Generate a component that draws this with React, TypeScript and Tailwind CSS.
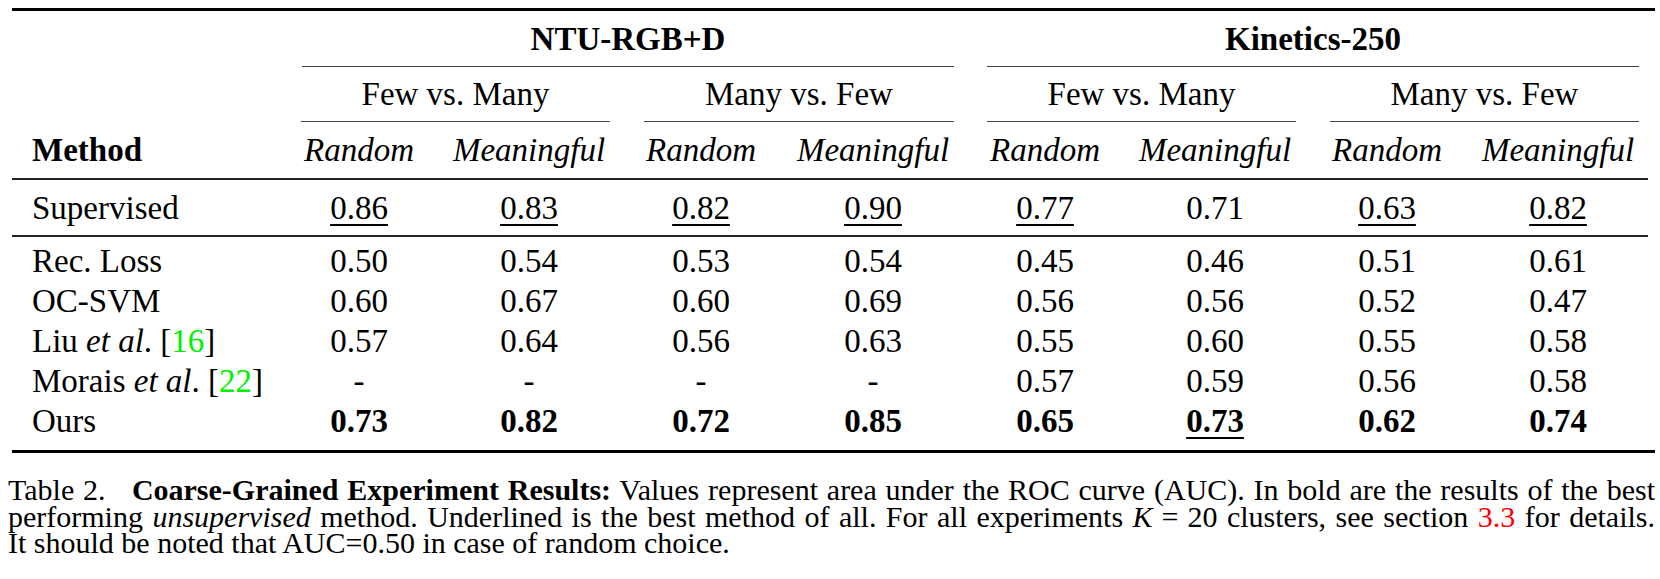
import React from "react";

const U = ({ children }: { children: React.ReactNode }) => (
  <span className="underline decoration-[1.5px] underline-offset-[5px]">{children}</span>
);

const Cell = ({ children, className = "" }: { children?: React.ReactNode; className?: string }) => (
  <div className={"flex items-center justify-center " + className}>{children}</div>
);

const MethodCell = ({ children }: { children: React.ReactNode }) => (
  <div className="flex items-center pl-[20px] whitespace-nowrap">{children}</div>
);

const body: { name: React.ReactNode; vals: React.ReactNode[] }[] = [
  { name: "Rec. Loss", vals: ["0.50", "0.54", "0.53", "0.54", "0.45", "0.46", "0.51", "0.61"] },
  { name: "OC-SVM", vals: ["0.60", "0.67", "0.60", "0.69", "0.56", "0.56", "0.52", "0.47"] },
  {
    name: (
      <span>
        Liu <i>et al</i>. [<span className="text-[#00f000]">16</span>]
      </span>
    ),
    vals: ["0.57", "0.64", "0.56", "0.63", "0.55", "0.60", "0.55", "0.58"],
  },
  {
    name: (
      <span>
        Morais <i>et al</i>. [<span className="text-[#00f000]">22</span>]
      </span>
    ),
    vals: ["-", "-", "-", "-", "0.57", "0.59", "0.56", "0.58"],
  },
  {
    name: "Ours",
    vals: [
      <b key="a">0.73</b>,
      <b key="b">0.82</b>,
      <b key="c">0.72</b>,
      <b key="d">0.85</b>,
      <b key="e">0.65</b>,
      <b key="f">
        <U>0.73</U>
      </b>,
      <b key="g">0.62</b>,
      <b key="h">0.74</b>,
    ],
  },
];

export default function App() {
  return (
    <div className="w-[1660px] h-[579px] bg-white text-black font-['Liberation_Serif',serif] overflow-hidden">
      <div className="ml-[12px] w-[1643px] pt-[8px]">
        <div className="h-[3px] bg-black" />
        <div className="grid grid-cols-[270px_154px_186px_158px_186px_158px_182px_162px_180px] text-[33px] leading-[40px]">
          {/* group headers */}
          <div className="h-[55px]" />
          <Cell className="col-span-4 h-[55px] ml-[20px] mr-[12px] font-bold">NTU-RGB+D</Cell>
          <Cell className="col-span-4 h-[55px] ml-[21px] mr-[9px] font-bold">Kinetics-250</Cell>
          {/* rules */}
          <div />
          <div className="col-span-4 h-px bg-[#444] ml-[20px] mr-[12px]" />
          <div className="col-span-4 h-px bg-[#444] ml-[21px] mr-[9px]" />
          {/* sub headers */}
          <div className="h-[54px]" />
          <Cell className="col-span-2 h-[54px] ml-[19px] mr-[12px]">Few vs. Many</Cell>
          <Cell className="col-span-2 h-[54px] ml-[22px] mr-[12px]">Many vs. Few</Cell>
          <Cell className="col-span-2 h-[54px] ml-[21px] mr-[10px]">Few vs. Many</Cell>
          <Cell className="col-span-2 h-[54px] ml-[24px] mr-[9px]">Many vs. Few</Cell>
          {/* rules */}
          <div />
          <div className="col-span-2 h-px bg-[#444] ml-[19px] mr-[12px]" />
          <div className="col-span-2 h-px bg-[#444] ml-[22px] mr-[12px]" />
          <div className="col-span-2 h-px bg-[#444] ml-[21px] mr-[10px]" />
          <div className="col-span-2 h-px bg-[#444] ml-[24px] mr-[9px]" />
          {/* method row */}
          <div className="h-[56px] flex items-center pl-[20px] font-bold">Method</div>
          {["Random", "Meaningful", "Random", "Meaningful", "Random", "Meaningful", "Random", "Meaningful"].map((t, i) => (
            <Cell key={i} className="h-[56px] italic">
              {t}
            </Cell>
          ))}
        </div>
        <div className="h-[2px] bg-[#222] w-[1636px]" />
        <div className="grid grid-cols-[270px_154px_186px_158px_186px_158px_182px_162px_180px] text-[33px] leading-[40px] h-[55px]">
          <MethodCell>Supervised</MethodCell>
          <Cell><U>0.86</U></Cell>
          <Cell><U>0.83</U></Cell>
          <Cell><U>0.82</U></Cell>
          <Cell><U>0.90</U></Cell>
          <Cell><U>0.77</U></Cell>
          <Cell>0.71</Cell>
          <Cell><U>0.63</U></Cell>
          <Cell><U>0.82</U></Cell>
        </div>
        <div className="h-[2px] bg-[#222] w-[1636px]" />
        <div className="grid grid-cols-[270px_154px_186px_158px_186px_158px_182px_162px_180px] auto-rows-[40px] text-[33px] leading-[40px] pt-[4px] pb-[9px]">
          {body.map((r, i) => (
            <React.Fragment key={i}>
              <MethodCell>{r.name}</MethodCell>
              {r.vals.map((v, j) => (
                <Cell key={j}>{v}</Cell>
              ))}
            </React.Fragment>
          ))}
        </div>
        <div className="h-[3px] bg-black" />
      </div>
      <div className="ml-[8px] w-[1647px] mt-[24px] text-[30px] leading-[26.5px]">
        <div className="whitespace-nowrap text-justify [text-align-last:justify]">
          Table 2.&nbsp;&nbsp; <b>Coarse-Grained Experiment Results:</b> Values represent area under the ROC curve (AUC). In bold are the results of the best
        </div>
        <div className="whitespace-nowrap text-justify [text-align-last:justify]">
          performing <i>unsupervised</i> method. Underlined is the best method of all. For all experiments{" "}
          <span className="inline-block">
            <i>K</i>
            <span className="inline-block mx-[9px]">=</span>20
          </span>{" "}
          clusters, see section <span className="text-[#ff0000]">3.3</span> for details.
        </div>
        <div className="whitespace-nowrap">It should be noted that AUC=0.50 in case of random choice.</div>
      </div>
    </div>
  );
}
